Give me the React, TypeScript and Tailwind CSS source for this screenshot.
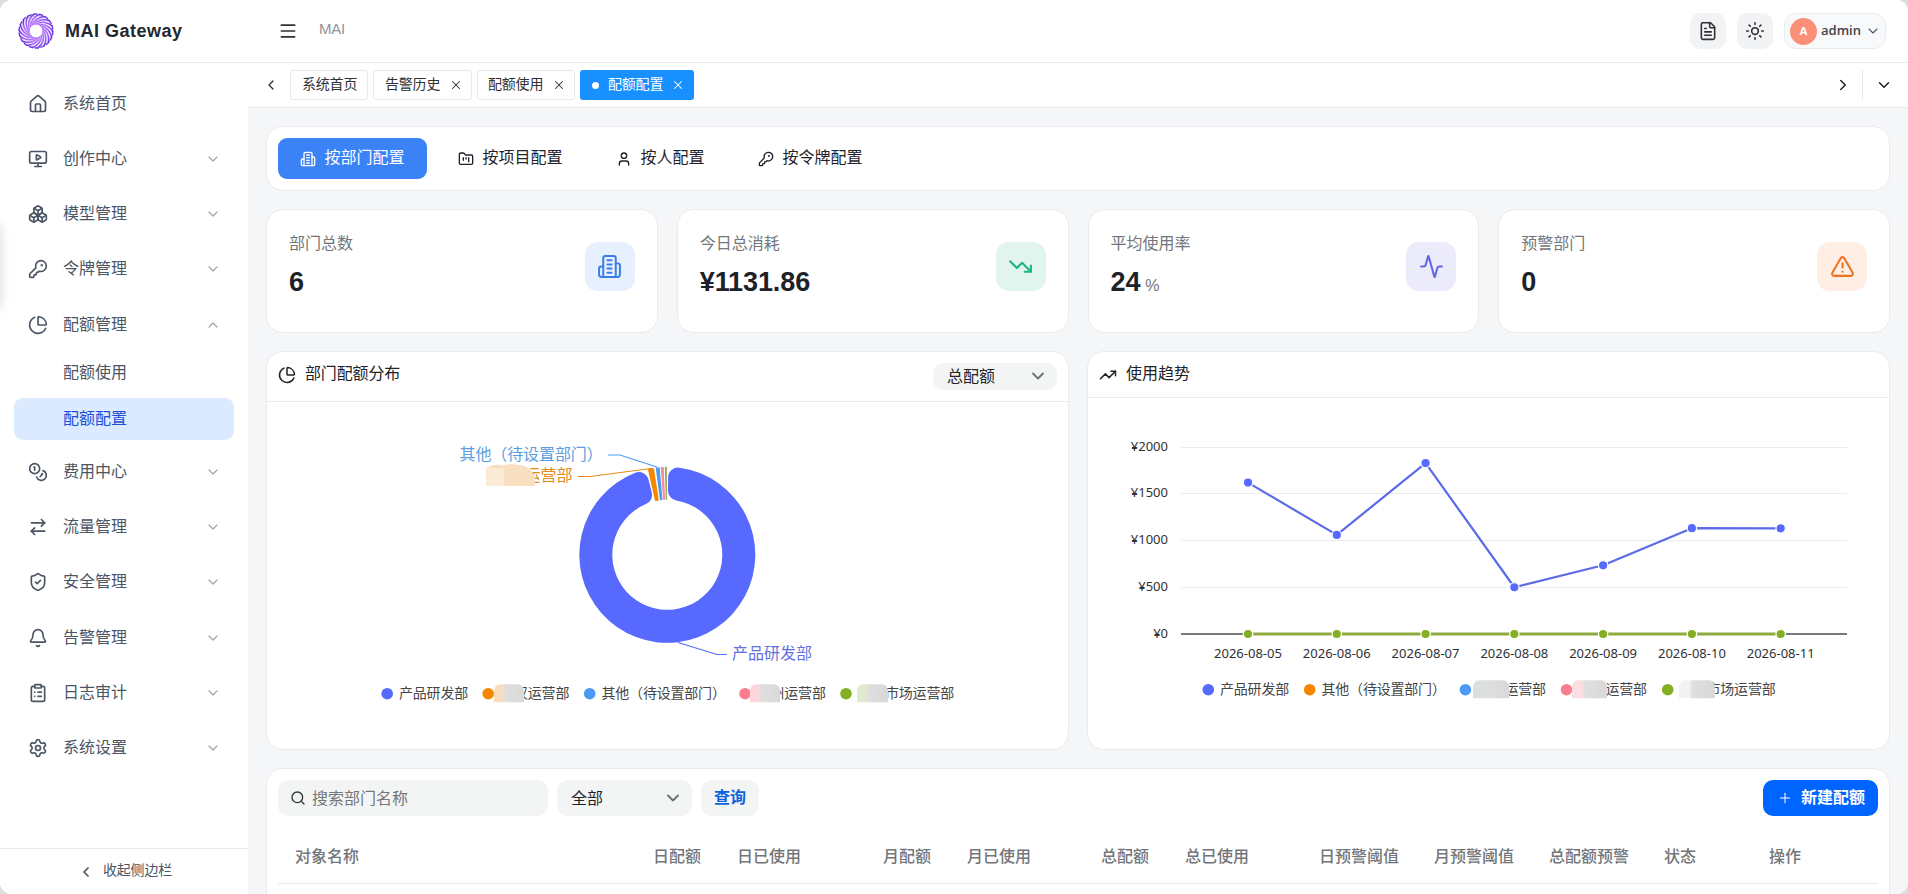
import type { ReactNode } from 'react'
import {
  Activity,
  ArrowRightLeft,
  Bell,
  Boxes,
  ChartPie,
  ChevronDown,
  ChevronLeft,
  ChevronRight,
  ChevronUp,
  ClipboardList,
  FileText,
  FolderKanban,
  House,
  KeyRound,
  Menu,
  MonitorPlay,
  Plus,
  Search,
  Settings,
  ShieldCheck,
  Sun,
  TrendingDown,
  TrendingUp,
  TriangleAlert,
  User,
  X,
} from 'lucide-react'

function Building({ size = 16, strokeWidth = 2 }: { size?: number; strokeWidth?: number }) {
  return (
    <svg width={size} height={size} viewBox="0 0 24 24" fill="none" stroke="currentColor" strokeWidth={strokeWidth} strokeLinecap="round" strokeLinejoin="round">
      <path d="M6 22V4a2 2 0 0 1 2-2h8a2 2 0 0 1 2 2v18Z" />
      <path d="M6 12H4a2 2 0 0 0-2 2v6a2 2 0 0 0 2 2h2" />
      <path d="M18 9h2a2 2 0 0 1 2 2v9a2 2 0 0 1-2 2h-2" />
      <path d="M10 6h4M10 10h4M10 14h4M10 18h4" />
    </svg>
  )
}

function CoinPair() {
  return (
    <svg width={20} height={20} viewBox="0 0 24 24" fill="none" stroke="currentColor" strokeWidth={2} strokeLinecap="round" strokeLinejoin="round">
      <circle cx="8" cy="8" r="6" />
      <path d="M18.09 10.37A6 6 0 1 1 10.34 18" />
      <path d="M7 6h1v4" />
      <path d="m16.71 13.88.7.71-2.82 2.82" />
    </svg>
  )
}

function Logo() {
  const blades = Array.from({ length: 18 }, (_, i) => i * 20)
  return (
    <svg width={36} height={36} viewBox="-18 -18 36 36" fill="none">
      <defs>
        <radialGradient id="swirl" gradientUnits="userSpaceOnUse" cx="0" cy="0" r="18">
          <stop offset="0.35" stopColor="#c084fc" />
          <stop offset="0.75" stopColor="#9a5cf5" />
          <stop offset="1" stopColor="#4c1fc9" />
        </radialGradient>
      </defs>
      <circle r="12" stroke="#efe2fe" strokeWidth="10.5" />
      {blades.map((a) => (
        <path key={a} d="M0 -6.8A14 14 0 0 1 16.3 -5" stroke="url(#swirl)" strokeWidth="1.5" transform={`rotate(${a})`} />
      ))}
      <circle r="17" stroke="#6a35dd" strokeWidth="1.3" strokeDasharray="4.4 1.5" />
      <circle r="7" stroke="#b67cf8" strokeWidth="0.9" />
    </svg>
  )
}

const menu = [
  { label: '系统首页', icon: <House size={20} />, leaf: true },
  { label: '创作中心', icon: <MonitorPlay size={20} /> },
  { label: '模型管理', icon: <Boxes size={20} /> },
  { label: '令牌管理', icon: <KeyRound size={20} /> },
  { label: '配额管理', icon: <ChartPie size={20} />, open: true },
  { label: '费用中心', icon: <CoinPair /> },
  { label: '流量管理', icon: <ArrowRightLeft size={20} /> },
  { label: '安全管理', icon: <ShieldCheck size={20} /> },
  { label: '告警管理', icon: <Bell size={20} /> },
  { label: '日志审计', icon: <ClipboardList size={20} /> },
  { label: '系统设置', icon: <Settings size={20} /> },
]

function Sidebar() {
  return (
    <aside className="flex w-[248px] shrink-0 flex-col bg-white text-[#4b5563]">
      <nav className="flex-1 pt-[13px]">
        {menu.map((m) => (
          <div key={m.label}>
            <div className="flex h-[55.25px] items-center pl-7 pr-[27px]">
              {m.icon}
              <span className="ml-[15px] flex-1 text-base">{m.label}</span>
              {!m.leaf && (
                <span className="text-[#9ca3af]">
                  {m.open ? <ChevronUp size={16} strokeWidth={1.8} /> : <ChevronDown size={16} strokeWidth={1.8} />}
                </span>
              )}
            </div>
            {m.open && (
              <div className="mx-[14px] mb-1 flex flex-col gap-1">
                <div className="flex h-[42px] items-center pl-[49px] text-base">配额使用</div>
                <div className="flex h-[42px] items-center rounded-[9px] bg-[#dbeafe] pl-[49px] text-base text-[#1d4ed8]">配额配置</div>
              </div>
            )}
          </div>
        ))}
      </nav>
      <div className="flex h-[46px] items-center border-t border-[#e6e8eb] pl-[78px] text-sm">
        <ChevronLeft size={16} strokeWidth={2.6} />
        <span className="-mt-[3px] ml-[9px] tracking-[-0.2px]">收起侧边栏</span>
      </div>
    </aside>
  )
}

function Header() {
  return (
    <header className="flex h-[63px] shrink-0 items-center border-b border-[#e6e8eb] bg-white">
      <div className="flex w-[248px] items-center pl-[18px]">
        <Logo />
        <span className="ml-[11px] text-[18px] font-bold tracking-[0.5px] text-[#23272e]">MAI Gateway</span>
      </div>
      <div className="ml-[30px] text-[#303133]">
        <Menu size={20} />
      </div>
      <span className="-mt-[3px] ml-[21px] text-[15px] tracking-[-0.3px] text-[#909399]">MAI</span>
      <div className="ml-auto mr-[22px] flex items-center gap-[11px] text-[#303133]">
        <div className="flex size-9 items-center justify-center rounded-[10px] bg-[#f2f3f5]">
          <FileText size={20} strokeWidth={1.9} />
        </div>
        <div className="flex size-9 items-center justify-center rounded-[10px] bg-[#f2f3f5]">
          <Sun size={20} strokeWidth={1.9} />
        </div>
        <div className="flex h-9 w-[102px] items-center rounded-xl border border-[#e8ecf1] bg-[#f8f9fb] pl-[5px]">
          <span className="flex size-[27px] items-center justify-center rounded-full bg-[#fa9078] font-['Open_Sans'] text-[11px] font-bold text-white">A</span>
          <span className="ml-[4px] font-['Open_Sans'] text-[13px] font-semibold text-[#3f4349]">admin</span>
          <ChevronDown size={16} strokeWidth={1.6} className="ml-1 text-[#4b5563]" />
        </div>
      </div>
    </header>
  )
}

function TabsBar() {
  const tab = 'flex h-[30px] items-center rounded-[3px] border border-[#e4e7ed] bg-white text-[#303133]'
  return (
    <div className="flex h-[45px] shrink-0 items-center border-b border-[#e6e8eb] bg-white text-sm tracking-[-0.2px]">
      <ChevronLeft size={16} strokeWidth={2} className="ml-[15px] text-[#303133]" />
      <div className="ml-[11px] flex gap-[5px]">
        <div className={`${tab} w-[78px] pl-[11px]`}>
          <span className="-mt-0.5">系统首页</span>
        </div>
        <div className={`${tab} w-[99px] pl-[11px]`}>
          <span className="-mt-0.5">告警历史</span>
          <X size={14} strokeWidth={1.8} className="ml-[9px]" />
        </div>
        <div className={`${tab} w-[98px] pl-[10px]`}>
          <span className="-mt-0.5">配额使用</span>
          <X size={14} strokeWidth={1.8} className="ml-[9px]" />
        </div>
        <div className="flex h-[30px] w-[114px] items-center rounded-[3px] bg-[#1890ff] pl-3 text-white">
          <span className="mr-[9px] size-[7px] rounded-full bg-white" />
          <span className="-mt-0.5">配额配置</span>
          <X size={14} strokeWidth={1.8} className="ml-2" />
        </div>
      </div>
      <ChevronRight size={18} strokeWidth={2} className="ml-auto text-[#202124]" />
      <div className="ml-[10px] h-[30px] w-px bg-[#e4e7ed]" />
      <ChevronDown size={18} strokeWidth={2} className="ml-3 mr-[15px] text-[#202124]" />
    </div>
  )
}

function Card({ className, children }: { className: string; children: ReactNode }) {
  return <section className={`rounded-[17px] border border-[#e9ebee] bg-white ${className}`}>{children}</section>
}

const modes = [
  { label: '按部门配置', icon: <Building size={16} />, active: true },
  { label: '按项目配置', icon: <FolderKanban size={16} /> },
  { label: '按人配置', icon: <User size={16} /> },
  { label: '按令牌配置', icon: <KeyRound size={16} /> },
]

function Modes() {
  return (
    <Card className="flex h-[65px] shrink-0 items-center gap-[9.500px] pl-[11px]">
      {modes.map((m) => (
        <div
          key={m.label}
          className={`flex h-[41px] items-center gap-[8.500px] rounded-[9px] px-[22px] text-base ${m.active ? 'bg-[#3b82f6] text-white' : 'text-[#1f2329]'}`}
        >
          {m.icon}
          <span className="-mt-px">{m.label}</span>
        </div>
      ))}
    </Card>
  )
}

const stats = [
  { label: '部门总数', value: '6', icon: <Building size={25} strokeWidth={1.9} />, tone: 'bg-[#e6f0fe] text-[#3b7de6]' },
  { label: '今日总消耗', value: '¥1131.86', icon: <TrendingDown size={25} />, tone: 'bg-[#e1f5ee] text-[#1db584]' },
  { label: '平均使用率', value: '24', unit: '%', icon: <Activity size={25} />, tone: 'bg-[#ecebfc] text-[#6366e1]' },
  { label: '预警部门', value: '0', icon: <TriangleAlert size={25} />, tone: 'bg-[#feeee4] text-[#ec7424]' },
]

function Stats() {
  return (
    <div className="grid h-[124px] shrink-0 grid-cols-4 gap-[19px]">
      {stats.map((s) => (
        <Card key={s.label} className="flex items-start justify-between px-[22px] pt-[22px]">
          <div>
            <div className="h-6 text-base leading-6 text-[#73767a]">{s.label}</div>
            <div className="mt-2 flex h-9 items-baseline leading-9">
              <span className="text-[27px] font-bold tracking-[-0.1px] text-[#1d2129]">{s.value}</span>
              {s.unit && <span className="ml-[5px] text-base text-[#73767a]">{s.unit}</span>}
            </div>
          </div>
          <div className={`mt-2.5 flex h-[49px] w-[50px] items-center justify-center rounded-[13px] ${s.tone}`}>{s.icon}</div>
        </Card>
      ))}
    </div>
  )
}

const CX = 667.3
const CY = 554.8

function at(r: number, a: number) {
  return `${(CX + r * Math.sin(a)).toFixed(2)} ${(CY - r * Math.cos(a)).toFixed(2)}`
}

// ring sector with rounded corners, angles in degrees clockwise from the top
function sector(from: number, to: number, c: number, R = 88, r = 55) {
  const a = (from * Math.PI) / 180
  const b = (to * Math.PI) / 180
  const o = Math.asin(c / (R - c))
  const i = Math.asin(c / (r + c))
  const ro = (R - c) * Math.cos(o)
  const ri = (r + c) * Math.cos(i)
  const big = b - a > Math.PI ? 1 : 0
  return [
    `M${at(ro, a)}`,
    `A${c} ${c} 0 0 1 ${at(R, a + o)}`,
    `A${R} ${R} 0 ${big} 1 ${at(R, b - o)}`,
    `A${c} ${c} 0 0 1 ${at(ro, b)}`,
    `L${at(ri, b)}`,
    `A${c} ${c} 0 0 1 ${at(r, b - i)}`,
    `A${r} ${r} 0 ${big} 0 ${at(r, a + i)}`,
    `A${c} ${c} 0 0 1 ${at(ri, a)}Z`,
  ].join('')
}

interface LegendItem {
  x: number
  color: string
  text: string
  textX: number
  mask?: [number, number, string]
}

function Legend({ items, y, id }: { items: LegendItem[]; y: number; id: string }) {
  return (
    <g fontSize="14" letterSpacing="-0.2" fill="#464646">
      {items.map((it, n) => (
        <g key={it.x}>
          <circle cx={it.x} cy={y} r="5.8" fill={it.color} />
          <text x={it.textX} y={y + 4.3}>
            {it.text}
          </text>
          {it.mask && (
            <>
              <defs>
                <linearGradient id={`${id}${n}`}>
                  <stop offset="0.3" stopColor={it.mask[2]} />
                  <stop offset="0.36" stopColor="#dedfde" />
                  <stop offset="1" stopColor="#d8d9d8" />
                </linearGradient>
              </defs>
              <path
                d={`M${it.mask[0]} ${y + 8.5}V${y - 3}Q${it.mask[0] + 1} ${y - 9.5} ${it.mask[0] + 6} ${y - 9.5}H${it.mask[1] - 5}Q${it.mask[1]} ${y - 8} ${it.mask[1]} ${y - 2}V${y + 8.5}Z`}
                fill={`url(#${id}${n})`}
              />
            </>
          )}
        </g>
      ))}
    </g>
  )
}

const pieLegend: LegendItem[] = [
  { x: 387.2, color: '#5769ff', text: '产品研发部', textX: 399 },
  { x: 488.2, color: '#f58700', text: '汉运营部', textX: 514, mask: [494, 524, '#f8dcc0'] },
  { x: 589.7, color: '#4b9bf5', text: '其他（待设置部门）', textX: 601.5 },
  { x: 745, color: '#fb7e90', text: '州运营部', textX: 770.5, mask: [750, 780, '#fdd5dc'] },
  { x: 846, color: '#82b022', text: '市场运营部', textX: 885, mask: [857, 888, '#dfe9cd'] },
]

const trendLegend: LegendItem[] = [
  { x: 1208.3, color: '#5769ff', text: '产品研发部', textX: 1220 },
  { x: 1309.7, color: '#f58700', text: '其他（待设置部门）', textX: 1321.5 },
  { x: 1465.4, color: '#4b9bf5', text: '运营部', textX: 1504.5, mask: [1473, 1509, '#dcdfe0'] },
  { x: 1566.5, color: '#fb7e90', text: '运营部', textX: 1605.5, mask: [1572, 1607, '#f9dfe2'] },
  { x: 1667.7, color: '#82b022', text: '市场运营部', textX: 1706.5, mask: [1679, 1715, '#f2f2f2'] },
]

function PieCard() {
  return (
    <Card className="flex flex-col">
      <div className="flex h-[50px] items-center justify-between border-b border-[#e9ebee] pl-[11px] pr-[11px]">
        <div className="-mt-1 flex items-center gap-[9px] text-base text-[#1f2329]">
          <ChartPie size={18} />
          <span className="-mt-0.5 tracking-[-0.15px]">部门配额分布</span>
        </div>
        <div className="mt-[-1px] flex h-[27px] w-[124px] items-center justify-between rounded-[10px] bg-[#f3f5f5] pl-3.5 pr-[9px] text-base text-[#1f2329]">
          <span className="mt-px">总配额</span>
          <ChevronDown size={20} strokeWidth={2.2} className="text-[#6b6f75]" />
        </div>
      </div>
      <svg className="block" width="801" height="347" viewBox="267 402 801 347">
        <path d={sector(0.6, 346, 10)} fill="#5769ff" />
        <path d={sector(347.2, 351.2, 1.2)} fill="#f58700" />
        <path d={sector(352.4, 355, 0.4)} fill="#4b9bf5" />
        <path d={sector(355.7, 357.7, 0.3)} fill="#f78a9b" />
        <path d={sector(358.4, 359.7, 0.1)} fill="#93ab55" />
        <g fill="none" strokeWidth="1.2">
          <path d="M608 455H620L657 467" stroke="#4b9bf5" />
          <path d="M578 476.5H590L651 468.5" stroke="#e48a1c" />
          <path d="M678 642.5L717 654.5H727" stroke="#5769ff" />
        </g>
        <g fontSize="16">
          <text x="459.5" y="460" fill="#5a9ee0" letterSpacing="-0.1">
            其他（待设置部门）
          </text>
          <text x="524.5" y="481" fill="#e28a1a">
            运营部
          </text>
          <text x="732" y="659" fill="#6570e0">
            产品研发部
          </text>
        </g>
        <path d="M486 468Q494 463 503 465.500Q510 463 518 465Q528 464 535 476V486H486Z" fill="#f7dfc0" />
        <path d="M486 468H504V486H486Z" fill="#fbead6" />
        <Legend items={pieLegend} y={693.7} id="pm" />
      </svg>
    </Card>
  )
}

const days = ['2026-08-05', '2026-08-06', '2026-08-07', '2026-08-08', '2026-08-09', '2026-08-10', '2026-08-11']
const spend = [1619, 1060, 1828, 500, 735, 1132, 1130]
const dayX = (i: number) => 1248 + i * 88.78
const moneyY = (v: number) => 634 - (v / 2000) * 187

function TrendCard() {
  return (
    <Card className="flex flex-col">
      <div className="flex h-[46px] shrink-0 items-center gap-[9px] border-b border-[#e9ebee] pl-[11px] text-base text-[#1f2329]">
        <TrendingUp size={18} />
        <span className="-mt-0.5">使用趋势</span>
      </div>
      <svg className="block" width="801" height="351" viewBox="1088 398 801 351">
        {[500, 1000, 1500, 2000].map((v) => (
          <path key={v} d={`M1181 ${Math.floor(moneyY(v)) + 0.5}H1847`} stroke="#ebecee" />
        ))}
        <path d="M1181 634H1847" stroke="#77797d" strokeWidth="2" />
        <g fontSize="13" fill="#303133" fontFamily="Noto Sans">
          {[0, 500, 1000, 1500, 2000].map((v) => (
            <text key={v} x="1168" y={moneyY(v) + 3.5} textAnchor="end">
              ¥{v}
            </text>
          ))}
          {days.map((d, i) => (
            <text key={d} x={dayX(i)} y="657.500" textAnchor="middle">
              {d}
            </text>
          ))}
        </g>
        <polyline points={spend.map((v, i) => `${dayX(i)},${moneyY(v)}`).join(' ')} fill="none" stroke="#5b6be8" strokeWidth="2.2" strokeLinejoin="round" />
        <path d={`M${dayX(0)} 634H${dayX(6)}`} stroke="#8fa93f" strokeWidth="2.8" />
        {spend.map((v, i) => (
          <g key={i} stroke="#fff" strokeWidth="1.2">
            <circle cx={dayX(i)} cy={moneyY(v)} r="4.7" fill="#5769ff" />
            <circle cx={dayX(i)} cy={634} r="4.7" fill="#82b022" />
          </g>
        ))}
        <Legend items={trendLegend} y={689.7} id="tm" />
      </svg>
    </Card>
  )
}

function TableCard() {
  return (
    <Card className="h-[200px] shrink-0 px-[11px] pt-[11px] text-base">
      <div className="flex h-9 gap-[9px]">
        <div className="flex w-[270px] items-center rounded-[11px] bg-[#f3f5f5] pl-3 text-[#73767a]">
          <Search size={16} strokeWidth={2} className="mr-1.5 text-[#303133]" />
          <span className="mt-px">搜索部门名称</span>
        </div>
        <div className="flex w-[135px] items-center justify-between rounded-[11px] bg-[#f3f5f5] pl-3.5 pr-[9px] text-[#1f2329]">
          <span className="mt-px">全部</span>
          <ChevronDown size={20} strokeWidth={2.2} className="text-[#6b6f75]" />
        </div>
        <div className="flex w-[58px] items-center justify-center rounded-[11px] bg-[#f3f5f5] font-bold text-[#0b63e0]">查询</div>
        <div className="ml-auto flex w-[115px] items-center rounded-[10px] bg-[#0064ff] pl-3.5 font-bold text-white">
          <Plus size={16} strokeWidth={1.6} className="mr-2" />
          新建配额
        </div>
      </div>
      <div className="mt-[15px] grid h-[53px] grid-cols-[322px_119px_111px_119px_99px_119px_135px_115px_115px_115px_104px_127px] items-center border-b border-[#e9ebee] font-medium text-[#73767a] [&>div]:px-[18px]">
        <div className="-ml-px">对象名称</div>
        <div className="text-right">日配额</div>
        <div>日已使用</div>
        <div className="text-right">月配额</div>
        <div className="whitespace-nowrap">月已使用</div>
        <div className="text-right">总配额</div>
        <div>总已使用</div>
        <div className="-ml-px whitespace-nowrap">日预警阈值</div>
        <div className="-ml-px whitespace-nowrap">月预警阈值</div>
        <div className="-ml-px whitespace-nowrap">总配额预警</div>
        <div className="-ml-px">状态</div>
        <div>操作</div>
      </div>
    </Card>
  )
}

export default function App() {
  return (
    <div className="h-[894px] w-[1908px] overflow-hidden bg-[#dcdddf] font-['Liberation_Sans','Noto_Sans_CJK_SC',sans-serif]">
      <div className="relative flex h-full flex-col overflow-hidden rounded-[12px] bg-white">
        <Header />
        <div className="flex min-h-0 flex-1">
          <Sidebar />
          <div className="flex min-w-0 flex-1 flex-col">
            <TabsBar />
            <main className="flex min-h-0 flex-1 flex-col gap-[18px] overflow-hidden bg-[#f5f6f8] p-[18px]">
              <Modes />
              <Stats />
              <div className="grid h-[399px] shrink-0 grid-cols-2 gap-[18px]">
                <PieCard />
                <TrendCard />
              </div>
              <TableCard />
            </main>
          </div>
        </div>
        <div className="pointer-events-none absolute -left-3 top-[222px] h-[88px] w-3 rounded-r-lg shadow-[0_0_12px_rgba(0,0,0,0.16)]" />
      </div>
    </div>
  )
}
